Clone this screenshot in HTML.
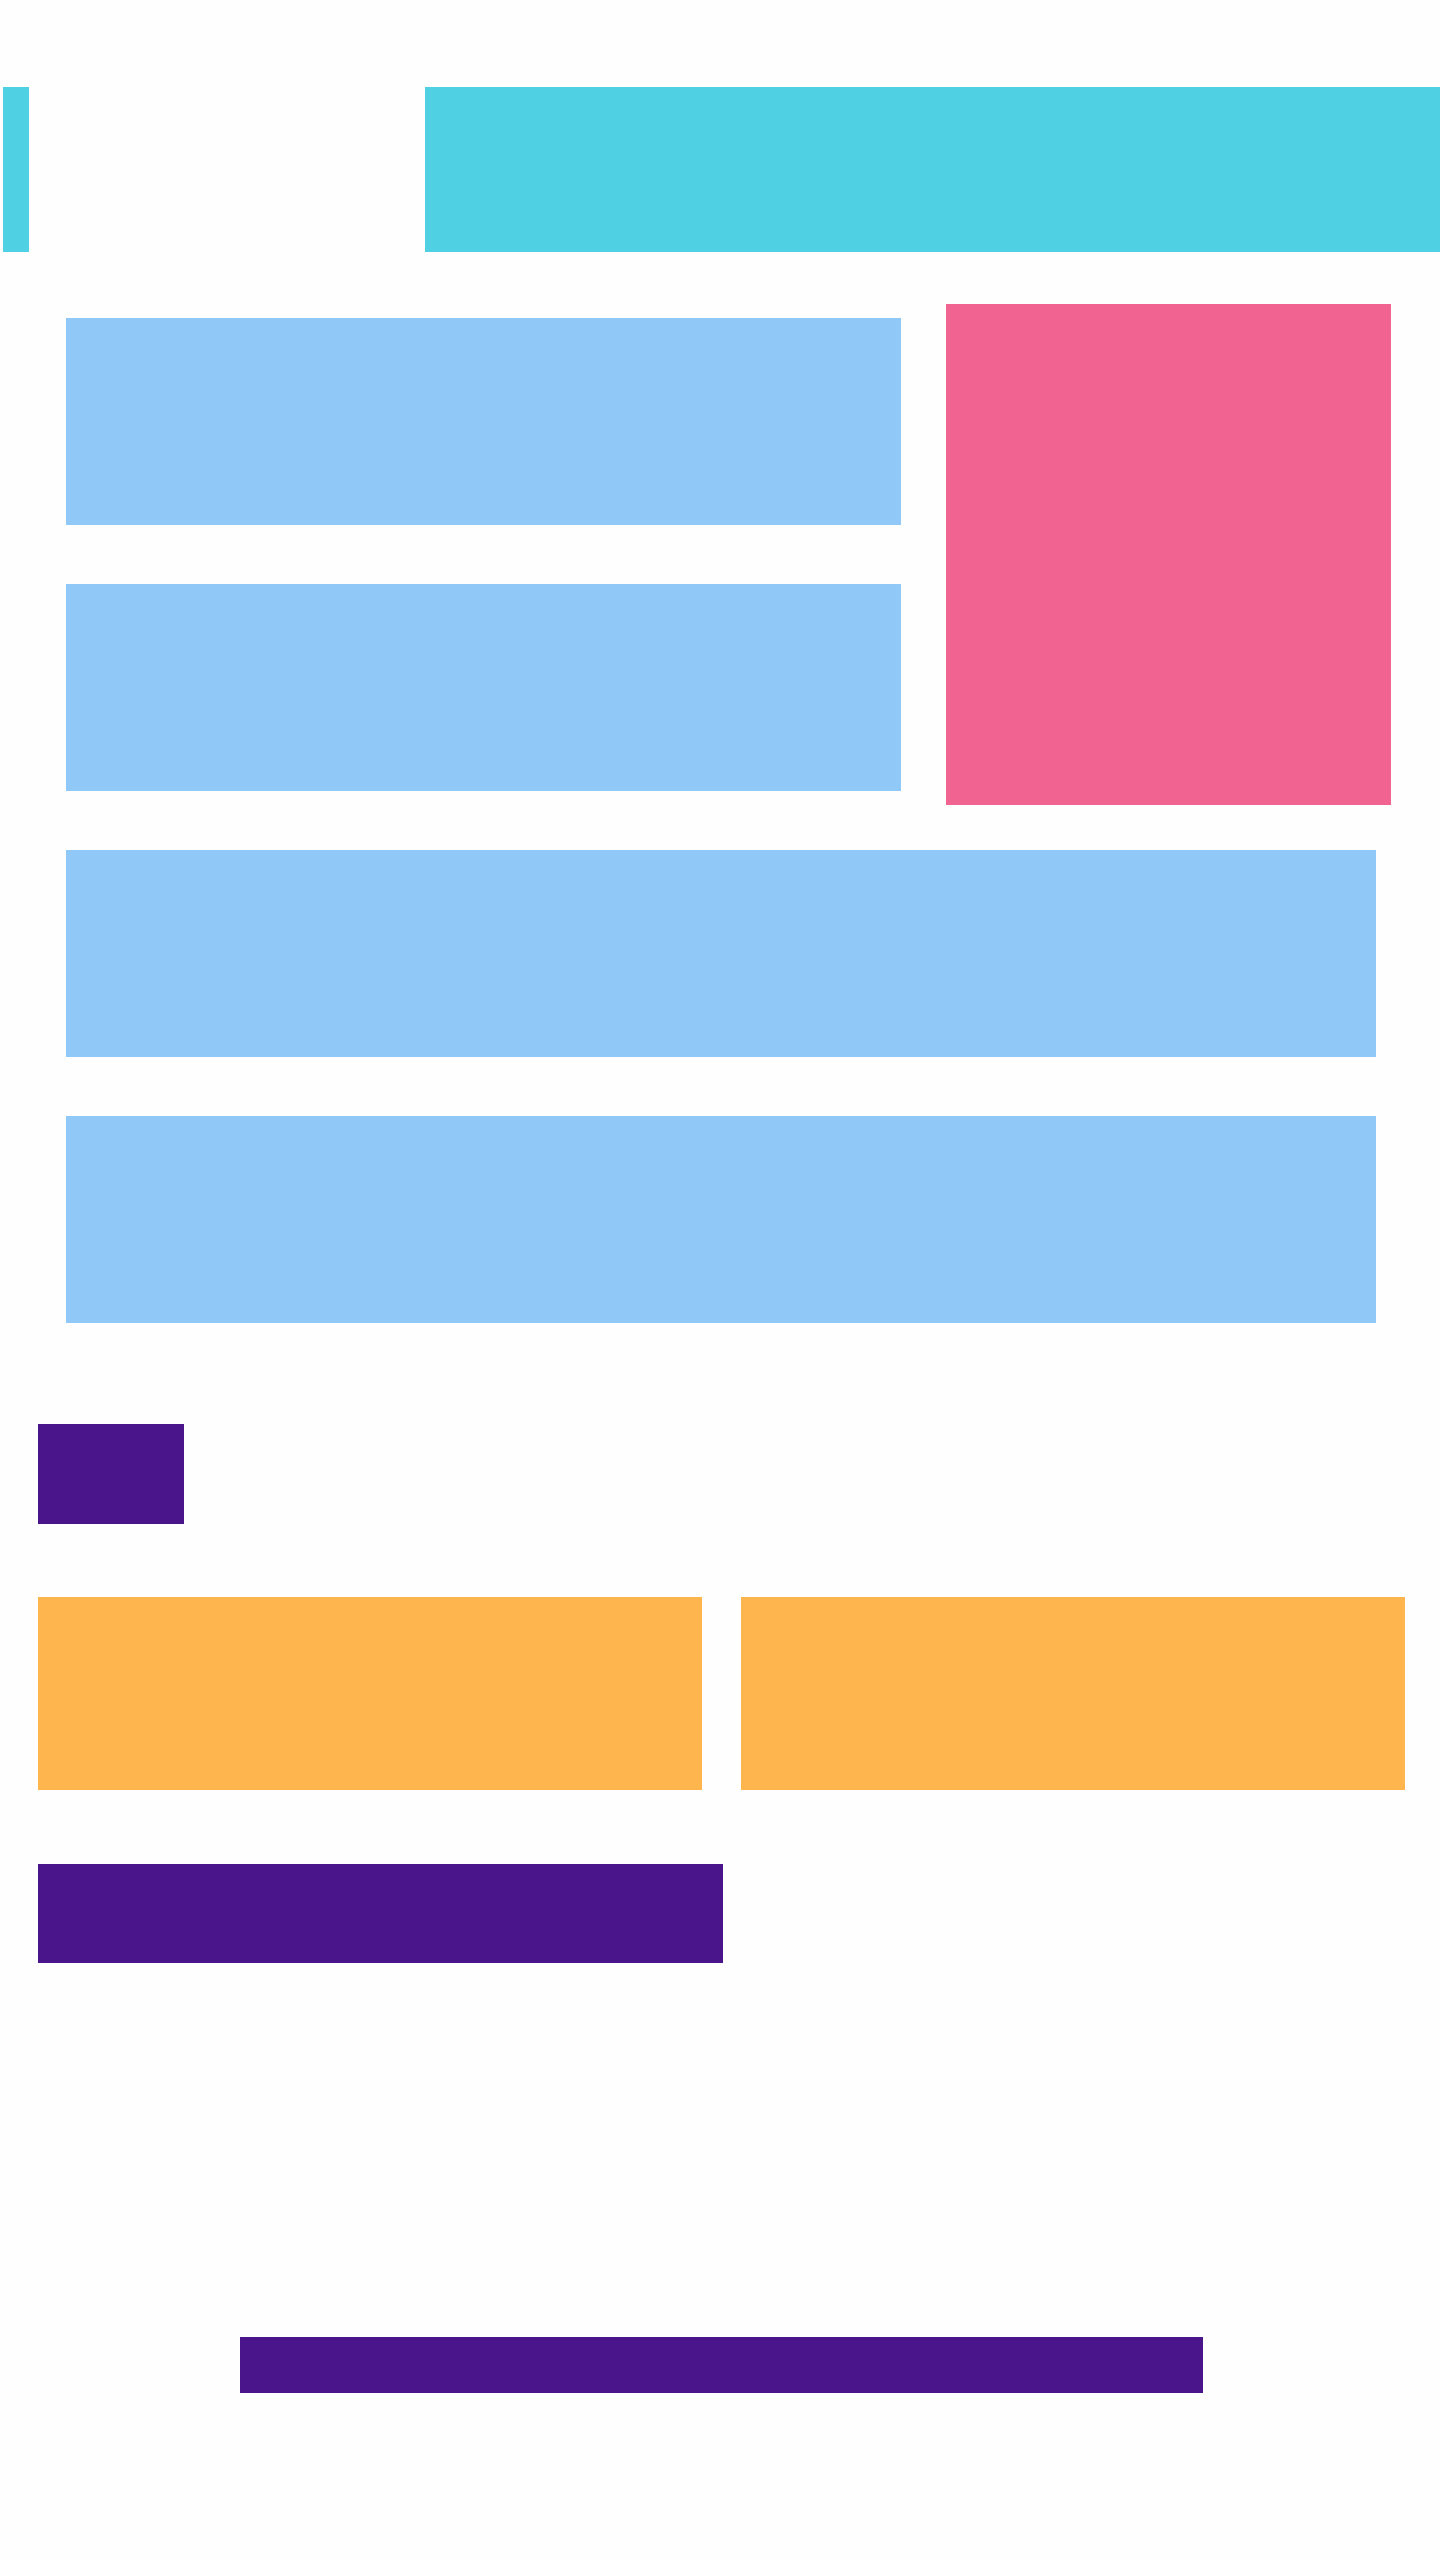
<!DOCTYPE html>
<html><head><meta charset="utf-8"><style>
html,body{margin:0;padding:0;background:#fefefe;}
body{width:1440px;height:2560px;position:relative;overflow:hidden;}
div{position:absolute;}
.c{background:#4fd0e3}.b{background:#90c9f8}.p{background:#f16492}.o{background:#feb54d}.v{background:#4a148b}
</style></head><body>
<div class="c" style="left:3px;top:87px;width:26px;height:165px"></div>
<div class="c" style="left:425px;top:87px;width:1015px;height:165px"></div>
<div class="b" style="left:66px;top:318px;width:835px;height:207px"></div>
<div class="b" style="left:66px;top:584px;width:835px;height:207px"></div>
<div class="p" style="left:946px;top:304px;width:445px;height:501px"></div>
<div class="b" style="left:66px;top:850px;width:1310px;height:207px"></div>
<div class="b" style="left:66px;top:1116px;width:1310px;height:207px"></div>
<div class="v" style="left:38px;top:1424px;width:146px;height:100px"></div>
<div class="o" style="left:38px;top:1597px;width:664px;height:193px"></div>
<div class="o" style="left:741px;top:1597px;width:664px;height:193px"></div>
<div class="v" style="left:38px;top:1864px;width:685px;height:99px"></div>
<div class="v" style="left:240px;top:2337px;width:963px;height:56px"></div>
</body></html>
